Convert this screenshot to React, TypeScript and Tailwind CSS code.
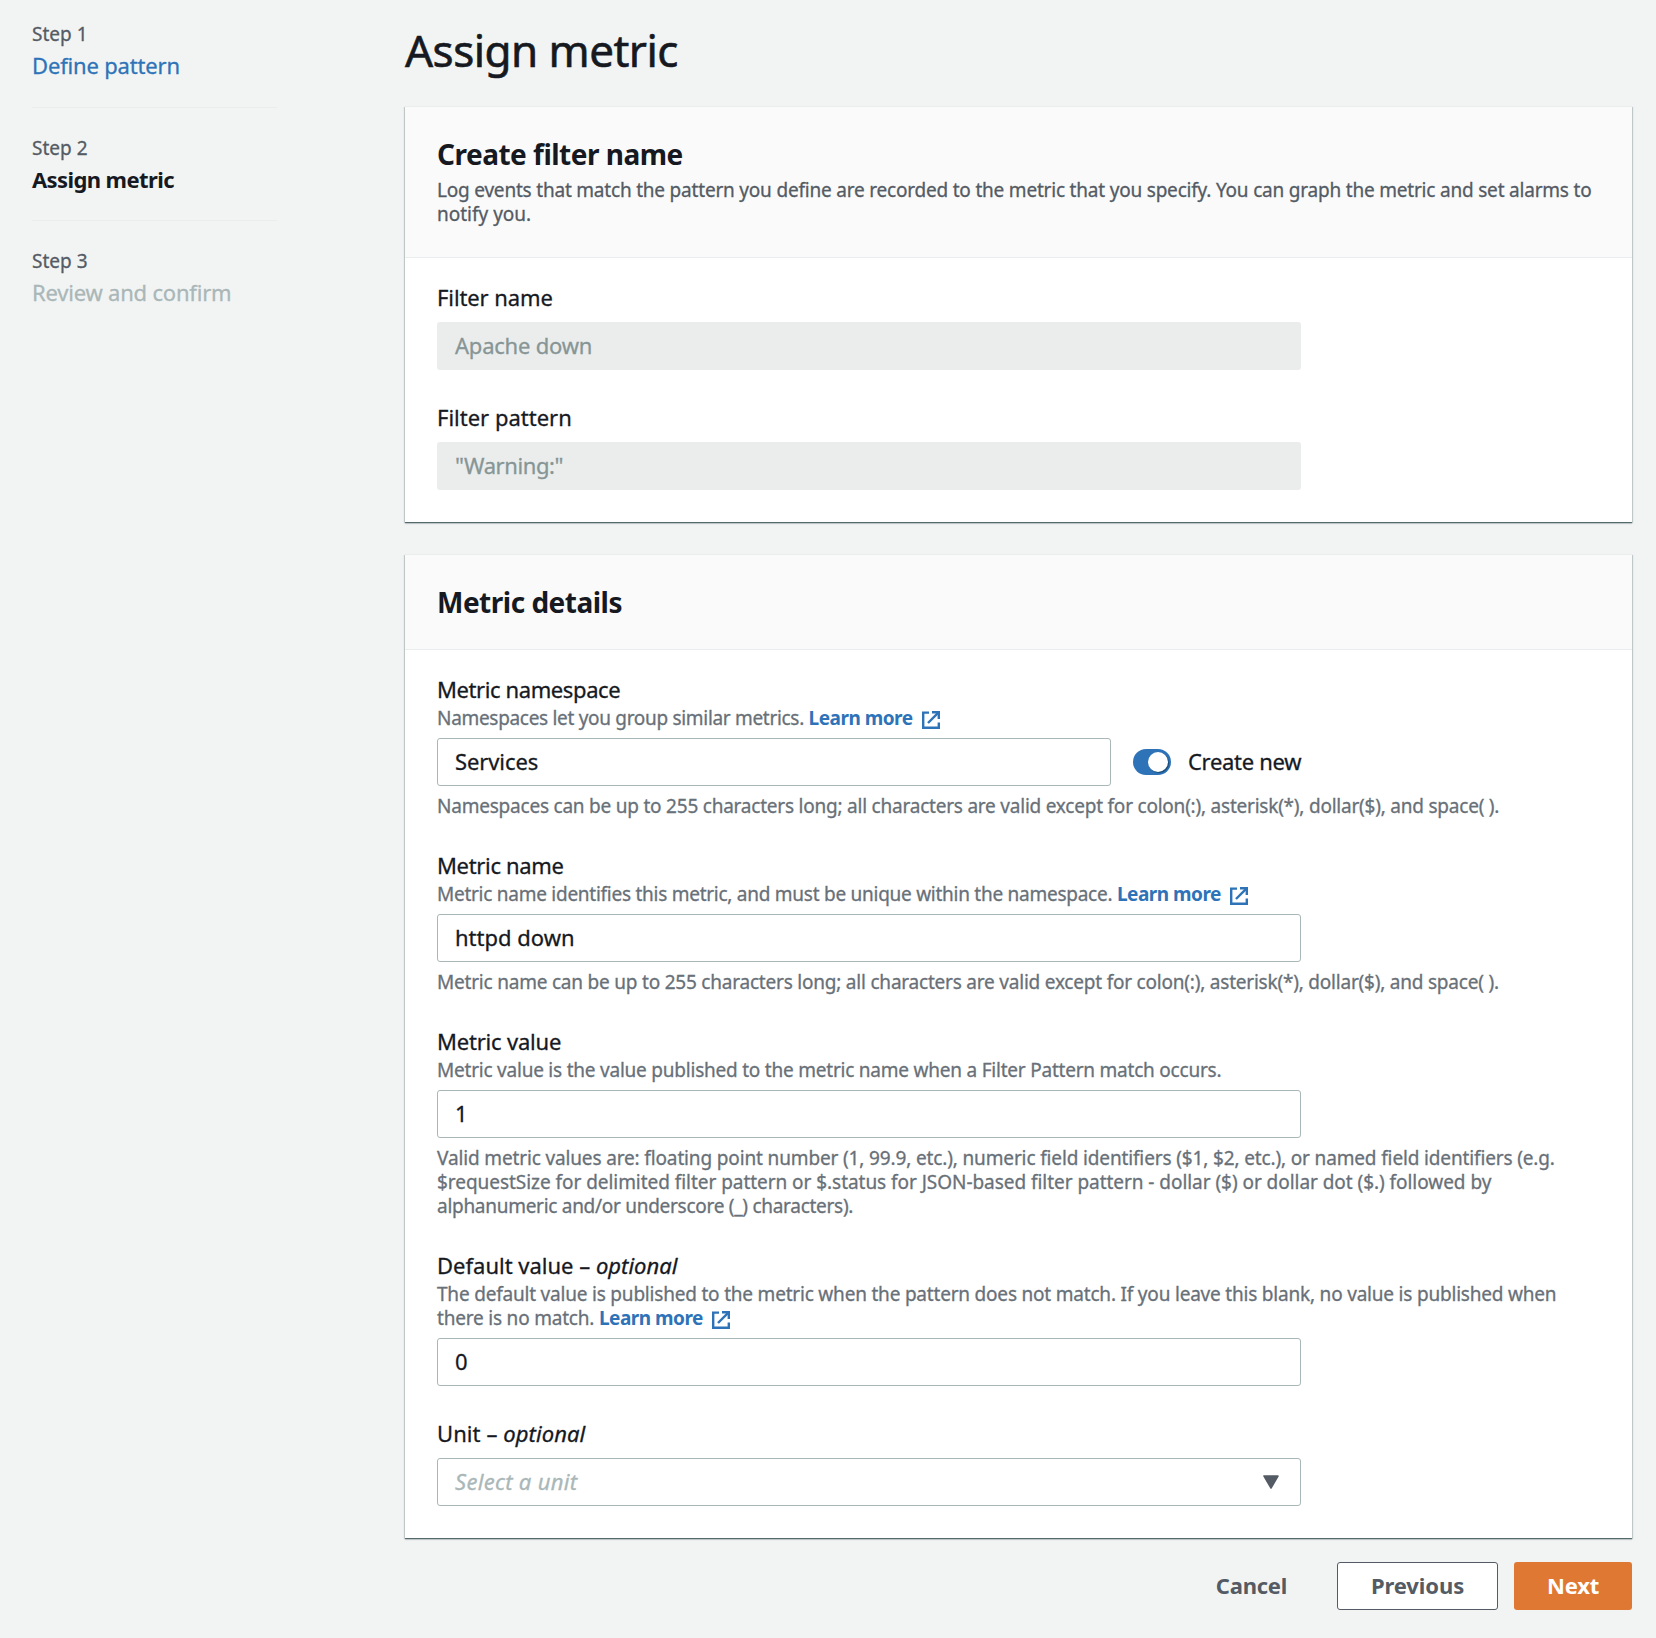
import type { ReactNode } from "react";

function ExternalIcon() {
  return (
    <svg className="ml-[9px] inline-block h-[18px] w-[18px] align-[-4px]" viewBox="0 0 18 18" fill="none" stroke="currentColor" strokeWidth="2.4">
      <path d="M7 1.6H1.2V16.8H16.8V11.5" />
      <path d="M10 1.2H16.8V8" />
      <path d="M16.6 1.4L6 12" />
    </svg>
  );
}

function LearnMore() {
  return (
    <a className="font-bold text-[#2e73b8] [-webkit-text-stroke:0]">
      <span className="tracking-[-0.5px]">Learn more</span>
      <ExternalIcon />
    </a>
  );
}

function Line({ children, className = "tracking-[-0.2px]" }: { children: ReactNode; className?: string }) {
  return <div className={`h-6 text-[19px] leading-6 whitespace-nowrap ${className}`}>{children}</div>;
}

function Label({ children, className = "" }: { children: ReactNode; className?: string }) {
  return <div className={`h-[30px] text-[22px] leading-[30px] whitespace-nowrap text-[#16191f] ${className}`}>{children}</div>;
}

function Input({ children, className = "w-[864px]" }: { children: ReactNode; className?: string }) {
  return (
    <div className={`flex h-12 rounded-[3px] border border-[#aab7b8] bg-white px-[17px] text-[22px] leading-[44px] text-[#16191f] ${className}`}>
      {children}
    </div>
  );
}

function Disabled({ children, className }: { children: ReactNode; className: string }) {
  return (
    <div className={`mt-[10px] h-12 w-[864px] rounded-[3px] bg-[#eaedec] px-[18px] text-[22px] leading-[46px] text-[#879596] ${className}`}>
      {children}
    </div>
  );
}

function Step({ n, title, className, titleClass }: { n: number; title: string; className: string; titleClass: string }) {
  return (
    <li className={className}>
      <div className="h-6 text-[19px] leading-6 text-[#545b64]">Step {n}</div>
      <div className={`mt-[3px] h-8 text-[22px] leading-8 ${titleClass}`}>{title}</div>
    </li>
  );
}

const card =
  "border-t border-[#eaeded] bg-white shadow-[0_1px_0_0_rgba(0,28,36,0.38),0_2px_1px_0_rgba(0,28,36,0.16),1px_1px_1px_0_rgba(0,28,36,0.18),-1px_1px_1px_0_rgba(0,28,36,0.18)]";
const cardHeader = "border-b border-[#eaeded] bg-[#fafafa] px-8 pt-[29px]";
const cardTitle = "h-9 text-[28px] leading-9 font-bold tracking-[-0.5px] text-[#16191f] [-webkit-text-stroke:0]";

export default function App() {
  return (
    <div className="flex h-[1638px] w-[1656px] bg-[#f2f4f3] font-['Noto_Sans',sans-serif] [-webkit-text-stroke:0.3px]">
      <nav className="w-[405px] shrink-0 pt-[22px] pl-8">
        <ol className="w-[245px]">
          <Step n={1} title="Define pattern" className="mb-7 border-b border-[#eaeded] pb-[26px]" titleClass="tracking-[-0.17px] text-[#2e73b8]" />
          <Step n={2} title="Assign metric" className="mb-7 border-b border-[#eaeded] pb-[25px]" titleClass="font-bold tracking-[-0.6px] text-[#16191f] [-webkit-text-stroke:0]" />
          <Step n={3} title="Review and confirm" className="" titleClass="tracking-[-0.2px] text-[#aab7b8]" />
        </ol>
      </nav>

      <main className="w-[1227px] pt-5">
        <h1 className="h-[60px] text-[44px] leading-[60px] tracking-[-0.53px] text-[#16191f] [-webkit-text-stroke:0.6px]">Assign metric</h1>

        <section className={`mt-[26px] ${card}`}>
          <header className={`pb-[31px] ${cardHeader}`}>
            <h2 className={cardTitle}>Create filter name</h2>
            <div className="mt-[6px] text-[#545b64]">
              <Line>Log events that match the pattern you define are recorded to the metric that you specify. You can graph the metric and set alarms to</Line>
              <Line className="tracking-[0px]">notify you.</Line>
            </div>
          </header>
          <div className="flex flex-col gap-8 px-8 pt-6 pb-8">
            <div>
              <Label className="tracking-[-0.1px]">Filter name</Label>
              <Disabled className="tracking-[-0.22px]">Apache down</Disabled>
            </div>
            <div>
              <Label>Filter pattern</Label>
              <Disabled className="tracking-[-0.4px]">"Warning:"</Disabled>
            </div>
          </div>
        </section>

        <section className={`mt-8 ${card}`}>
          <header className={`pb-[29px] ${cardHeader}`}>
            <h2 className={cardTitle}>Metric details</h2>
          </header>
          <div className="flex flex-col gap-8 px-8 pt-6 pb-8 text-[#687078]">
            <div>
              <Label className="tracking-[-0.4px]">Metric namespace</Label>
              <div className="mt-[2px] mb-2">
                <Line className="tracking-[-0.31px]">Namespaces let you group similar metrics. <LearnMore /></Line>
              </div>
              <div className="flex items-center">
                <Input className="w-[674px] tracking-[-0.1px]">Services</Input>
                <span className="ml-[22px] flex h-[26px] w-[38px] items-center justify-end rounded-full bg-[#2e73b8] pr-[3px]">
                  <span className="h-5 w-5 rounded-full bg-white shadow-[1px_1px_1px_rgba(0,28,36,0.5)]" />
                </span>
                <span className="ml-[17px] h-12 text-[22px] leading-[46px] tracking-[-0.3px] text-[#16191f]">Create new</span>
              </div>
              <div className="mt-2">
                <Line className="tracking-[-0.22px]">Namespaces can be up to 255 characters long; all characters are valid except for colon(:), asterisk(*), dollar($), and space( ).</Line>
              </div>
            </div>

            <div>
              <Label className="tracking-[-0.33px]">Metric name</Label>
              <div className="mt-[2px] mb-2">
                <Line className="tracking-[-0.26px]">Metric name identifies this metric, and must be unique within the namespace. <LearnMore /></Line>
              </div>
              <Input>httpd down</Input>
              <div className="mt-2">
                <Line className="tracking-[-0.21px]">Metric name can be up to 255 characters long; all characters are valid except for colon(:), asterisk(*), dollar($), and space( ).</Line>
              </div>
            </div>

            <div>
              <Label className="tracking-[-0.2px]">Metric value</Label>
              <div className="mt-[2px] mb-2">
                <Line className="tracking-[-0.22px]">Metric value is the value published to the metric name when a Filter Pattern match occurs.</Line>
              </div>
              <Input>1</Input>
              <div className="mt-2">
                <Line className="tracking-[-0.14px]">Valid metric values are: floating point number (1, 99.9, etc.), numeric field identifiers ($1, $2, etc.), or named field identifiers (e.g.</Line>
                <Line className="tracking-[-0.045px]">$requestSize for delimited filter pattern or $.status for JSON-based filter pattern - dollar ($) or dollar dot ($.) followed by</Line>
                <Line className="tracking-[-0.28px]">alphanumeric and/or underscore (_) characters).</Line>
              </div>
            </div>

            <div>
              <Label>Default value – <i>optional</i></Label>
              <div className="mt-[2px] mb-2">
                <Line>The default value is published to the metric when the pattern does not match. If you leave this blank, no value is published when</Line>
                <Line>there is no match. <LearnMore /></Line>
              </div>
              <Input>0</Input>
            </div>

            <div>
              <Label className="mb-[10px] tracking-[0.08px]">Unit – <i>optional</i></Label>
              <Input className="w-[864px] items-center">
                <i className="h-[46px] grow tracking-[0.3px] text-[#aab7b8]">Select a unit</i>
                <svg className="mr-[4px] h-[14px] w-4" viewBox="0 0 16 14">
                  <path d="M1 1H15L8 13Z" fill="#545b64" stroke="#545b64" strokeWidth="1.5" strokeLinejoin="round" />
                </svg>
              </Input>
            </div>
          </div>
        </section>

        <div className="mt-6 flex justify-end text-[22px] font-bold text-[#545b64] [-webkit-text-stroke:0]">
          <span className="mr-[50px] leading-[47px] tracking-[-0.25px]">Cancel</span>
          <span className="mr-4 h-12 w-[161px] rounded-[3px] border border-[#545b64] bg-white text-center leading-[44px] tracking-[-0.1px]">Previous</span>
          <span className="h-12 w-[118px] rounded-[3px] bg-[#df7832] text-center leading-[46px] tracking-[-0.2px] text-white">Next</span>
        </div>
      </main>
    </div>
  );
}
